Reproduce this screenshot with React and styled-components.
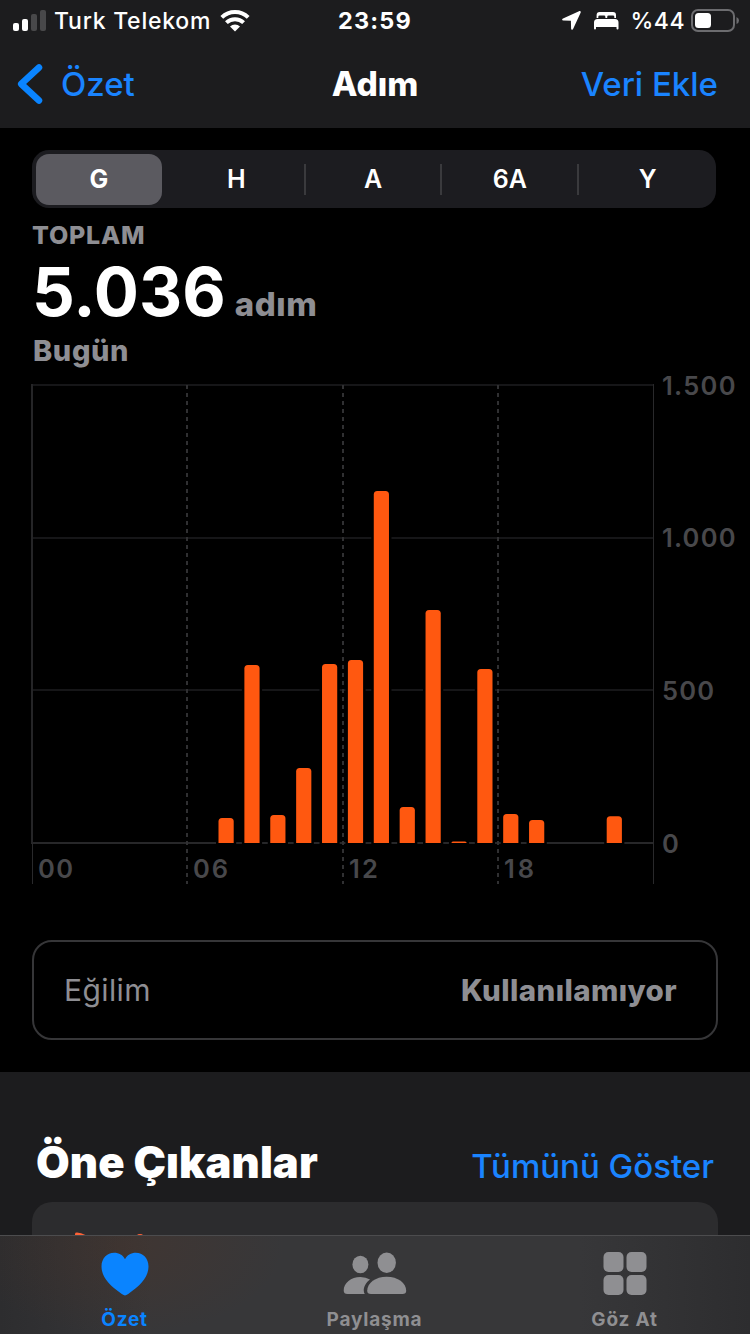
import React, { useState } from 'react';
import styled, { createGlobalStyle } from 'styled-components';

const GlobalStyle = createGlobalStyle`
  * {
    box-sizing: border-box;
  }

  body {
    margin: 0;
    background: #000;
    font-family: Inter, "Liberation Sans", sans-serif;
  }
`;

const Screen = styled.div`
  display: flex;
  flex-direction: column;
  width: 750px;
  height: 1334px;
  overflow: hidden;
  color: #fff;
  background: #000;
`;

const Header = styled.header`
  height: 128px;
  flex-shrink: 0;
  background: #1c1c1e;
`;

const StatusBar = styled.div`
  display: grid;
  grid-template-columns: 1fr auto 1fr;
  align-items: center;
  height: 41px;
  padding: 0 11px 0 13px;
`;

const StatusGroup = styled.div`
  display: flex;
  align-items: center;
  justify-content: ${(props) => (props.$end ? 'flex-end' : 'flex-start')};
`;

const StatusText = styled.span`
  font-size: 23px;
  line-height: 28px;
  font-weight: 500;
  letter-spacing: ${(props) => props.$spacing || 0}px;
  margin: ${(props) => props.$margin || 0};
  white-space: nowrap;
`;

const Clock = styled.time`
  padding-right: 2px;
  font-size: 23.5px;
  line-height: 28px;
  font-weight: 700;
  letter-spacing: 1.2px;
`;

const NavBar = styled.nav`
  display: grid;
  grid-template-columns: 1fr auto 1fr;
  align-items: center;
  height: 85px;
  padding: 0 32px 0 17px;
`;

const NavButton = styled.button`
  display: flex;
  align-items: center;
  justify-self: ${(props) => (props.$end ? 'end' : 'start')};
  gap: 18px;
  padding: 0;
  border: none;
  background: none;
  color: #1a84ff;
  font-family: inherit;
  font-size: 33px;
  line-height: 40px;
  font-weight: 500;
  cursor: pointer;
`;

const NavTitle = styled.h1`
  margin: 0 -15px 0 0;
  font-size: 33.5px;
  line-height: 40px;
  font-weight: 800;
`;

const Content = styled.main`
  flex: 1;
  min-height: 0;
  overflow: hidden;
`;

const Segments = styled.div`
  display: grid;
  grid-template-columns: repeat(5, 1fr);
  width: 684px;
  height: 58px;
  margin: 22px 0 0 32px;
  border-radius: 17px;
  background: #1c1c20;
`;

const Segment = styled.button`
  margin: ${(props) => (props.$active ? '4px 7px 4px 4px' : '14px 0')};
  padding: 0 0 1px;
  border: none;
  border-right: ${(props) => (props.$divider ? '2px solid #3a3a3d' : 'none')};
  border-radius: ${(props) => (props.$active ? '13px' : 0)};
  background: ${(props) => (props.$active ? '#5b5a60' : 'transparent')};
  color: #fff;
  font-family: inherit;
  font-size: 25px;
  font-weight: ${(props) => (props.$active ? 700 : 600)};
  cursor: pointer;
`;

const Summary = styled.section`
  padding: 12px 33px 2px;
  color: #8e8e93;
`;

const SummaryLabel = styled.div`
  margin-left: -1px;
  font-size: 25px;
  line-height: 30px;
  font-weight: 800;
  letter-spacing: 0.8px;
`;

const SummaryValue = styled.div`
  display: flex;
  align-items: baseline;
  gap: 9px;
  height: 84px;
  line-height: 84px;
`;

const Amount = styled.span`
  margin-left: -1px;
  color: #fff;
  font-size: 67px;
  font-weight: 700;
`;

const Unit = styled.span`
  font-size: 33px;
  font-weight: 800;
  letter-spacing: 0.6px;
`;

const SummaryDate = styled.div`
  font-size: 29px;
  line-height: 34px;
  font-weight: 800;
  letter-spacing: 0.6px;
`;

const ChartSvg = styled.svg`
  display: block;
  width: 750px;
  height: 520px;
`;

const AxisText = styled.text`
  fill: #48484b;
  font-size: 25.5px;
  font-weight: 600;
`;

const TrendCard = styled.section`
  display: flex;
  align-items: center;
  justify-content: space-between;
  width: 686px;
  height: 100px;
  margin: 50px 0 32px 32px;
  padding: 0 39px 0 30px;
  border: 2px solid #363638;
  border-radius: 20px;
  color: #8e8e93;
  font-size: 30px;
  letter-spacing: 0.4px;
`;

const TrendValue = styled.span`
  font-size: 29.5px;
  font-weight: 800;
`;

const Highlights = styled.section`
  height: 400px;
  padding: 64px 32px 0;
  background: #1c1c1e;
`;

const HighlightsHead = styled.div`
  display: flex;
  align-items: baseline;
  justify-content: space-between;
  height: 66px;
  padding: 0 4px;
`;

const HighlightsTitle = styled.h2`
  margin: 0;
  font-size: 43.5px;
  line-height: 52px;
  font-weight: 900;
  letter-spacing: 0.1px;
`;

const HighlightCard = styled.div`
  height: 200px;
  padding: 30px 42px;
  border-radius: 20px;
  background: #2c2c2e;
`;

const TabBar = styled.nav`
  display: grid;
  grid-template-columns: repeat(3, 250px);
  flex-shrink: 0;
  height: 99px;
  border-top: 1px solid #4c4c4e;
  background:
    radial-gradient(ellipse 160px 90px at 125px 10px, rgba(90, 50, 30, 0.25), transparent),
    linear-gradient(90deg, #2d2d2f 0, #373739 150px, #373739 580px, #2d2d2f 750px);
`;

const Tab = styled.button`
  display: flex;
  flex-direction: column;
  align-items: center;
  gap: 12px;
  padding: 16px 1px 0 0;
  border: none;
  background: none;
  color: ${(props) => (props.$active ? '#0a84ff' : '#8f8f92')};
  font-family: inherit;
  font-size: 19px;
  line-height: 24px;
  font-weight: 700;
  letter-spacing: 0.8px;
  cursor: pointer;
`;

const ranges = ['G', 'H', 'A', '6A', 'Y'];

const steps = [
  { hour: 7, count: 82 },
  { hour: 8, count: 583 },
  { hour: 9, count: 92 },
  { hour: 10, count: 246 },
  { hour: 11, count: 586 },
  { hour: 12, count: 599 },
  { hour: 13, count: 1153 },
  { hour: 14, count: 118 },
  { hour: 15, count: 763 },
  { hour: 16, count: 5 },
  { hour: 17, count: 570 },
  { hour: 18, count: 95 },
  { hour: 19, count: 75 },
  { hour: 22, count: 88 },
];

const SignalIcon = () => (
  <svg width="34" height="22" viewBox="0 0 34 22" fill="#fff">
    <rect x="0" y="13" width="6" height="8" rx="2" />
    <rect x="9" y="9" width="6" height="12" rx="2" />
    <rect x="18" y="4" width="6" height="17" rx="2" fill="#48484a" />
    <rect x="27" y="0" width="6" height="21" rx="2" fill="#48484a" />
  </svg>
);

const WifiIcon = () => (
  <svg width="30" height="22" viewBox="0 0 30 22" fill="none" stroke="#fff" strokeWidth="4">
    <path d="M1.8 7.4A19 19 0 0 1 28.2 7.4" />
    <path d="M6.4 12.6A12.4 12.4 0 0 1 23.6 12.6" />
    <path d="M15 21.6L10 16.6A7.2 7.2 0 0 1 20 16.6Z" fill="#fff" stroke="none" />
  </svg>
);

const LocationIcon = () => (
  <svg width="19" height="19" viewBox="0 0 19 19" fill="#fff">
    <path d="M17 .2L1 7.5C-.3 8.2-.1 9.5 1.2 9.6L8.9 9.8 9.1 17.4C9.2 18.8 10.6 19.1 11.2 17.8L18.6 1.8C19.1.7 18.3-.3 17 .2Z" />
  </svg>
);

const BedSvg = styled.svg`
  margin: 1px 11px 0 13px;
`;

const BedIcon = () => (
  <BedSvg width="25" height="18" viewBox="0 0 25 18" fill="#fff">
    <path d="M2.6 6V3Q2.6 0 5.6 0H19Q22 0 22 3V6H20.3V4.8Q20.3 3.6 19 3.6H14.6Q13.2 3.6 13.2 5V6H11.4V5Q11.4 3.6 10 3.6H5.6Q4.3 3.6 4.3 4.8V6Z" />
    <path d="M0 16.5V10.5Q0 7 3.5 7H21Q24.5 7 24.5 10.5V16.5Q24.5 17.5 23.5 17.5T22.5 16.5V15H2V16.5Q2 17.5 1 17.5T0 16.5Z" />
  </BedSvg>
);

const BatteryIcon = () => (
  <svg width="48" height="23" viewBox="0 0 48 23">
    <rect x="1" y="1" width="42" height="21" rx="6" fill="none" stroke="#6c6c6f" strokeWidth="2" />
    <rect x="4" y="4" width="16" height="15" rx="3.5" fill="#fff" />
    <path d="M45.5 8Q48 9.2 48 11.5T45.5 15Z" fill="#6c6c6f" />
  </svg>
);

const BackIcon = () => (
  <svg width="26" height="40" viewBox="0 0 26 40" fill="none">
    <path d="M22 3.5L4.2 20L22 36.5" stroke="#0a84ff" strokeWidth="6.5" strokeLinecap="round" strokeLinejoin="round" />
  </svg>
);

const HeartIcon = () => (
  <svg width="48" height="44" viewBox="0 0 48 44" fill="currentColor">
    <path d="M24 43.5Q22.8 43.3 20.8 41.9C8.5 33.5.5 25 .5 14.5C.5 6.5 6 .8 13.2.8C18 .8 22 3.2 24 7.2C26 3.2 30 .8 34.8.8C42 .8 47.5 6.5 47.5 14.5C47.5 25 39.5 33.5 27.2 41.9Q25.2 43.3 24 43.5Z" />
  </svg>
);

const PeopleIcon = () => (
  <svg width="64" height="44" viewBox="0 0 64 44" fill="currentColor">
    <ellipse cx="17.4" cy="12.5" rx="8" ry="8.8" />
    <ellipse cx="43.7" cy="10.8" rx="9.2" ry="10.2" />
    <path d="M4.5 42Q.7 42 .7 38.5C.7 31 8 25 17.4 25Q23 25 27 27.5C22.8 30.8 20.5 34.8 20.8 39Q20.9 40.8 21.8 42Z" />
    <path d="M28 42Q24.2 42 24.2 38.7C24.2 31 32.5 24.7 43.7 24.7S63.2 31 63.2 38.7Q63.2 42 59.4 42Z" />
  </svg>
);

const GridIcon = () => (
  <svg width="44" height="44" viewBox="0 0 44 44" fill="currentColor">
    <rect x="0.5" y="0" width="20" height="20" rx="5" />
    <rect x="23.5" y="0" width="20" height="20" rx="5" />
    <rect x="0.5" y="23" width="20" height="20" rx="5" />
    <rect x="23.5" y="23" width="20" height="20" rx="5" />
  </svg>
);

const tabs = [
  { label: 'Özet', icon: HeartIcon },
  { label: 'Paylaşma', icon: PeopleIcon },
  { label: 'Göz At', icon: GridIcon },
];

const StepChart = () => {
  const left = 32;
  const hourWidth = 25.88;
  const bottom = 473;
  const toY = (count) => bottom - (count * 458) / 1500;

  return (
    <ChartSvg viewBox="0 0 750 520">
      {[500, 1000, 1500].map((count) => (
        <path key={count} d={`M${left} ${Math.round(toY(count))}H654`} stroke="#161618" strokeWidth="2" />
      ))}
      <path d="M31 473H654" stroke="#272729" strokeWidth="2" />
      <path d="M32 14V473" stroke="#252527" strokeWidth="2" />
      <path d="M32.5 473V514" stroke="#29292b" />
      <path d="M653.5 14V514" stroke="#29292b" />
      {steps.map(({ hour, count }) => {
        const x = left + hourWidth * (hour + 0.5) - 7.6;
        const y = toY(count);
        const r = Math.min(3.5, bottom - y);
        const bar = `M${x} ${bottom}V${y + r}q0 ${-r} ${r} ${-r}h${15.2 - 2 * r}q${r} 0 ${r} ${r}V${bottom}Z`;
        return (
          <g key={hour}>
            <path d={bar} fill="#000" stroke="#000" strokeWidth="5" />
            <path d={bar} fill="#ff5810" />
          </g>
        );
      })}
      {[187, 343, 498].map((x) => (
        <path key={x} d={`M${x} 15V514`} stroke="#303032" strokeWidth="2" strokeDasharray="4 4" />
      ))}
      <AxisText x="662" y="25" textLength="73.5">1.500</AxisText>
      <AxisText x="662" y="177" textLength="73.5">1.000</AxisText>
      <AxisText x="662" y="330" textLength="52">500</AxisText>
      <AxisText x="662" y="483">0</AxisText>
      <AxisText x="38" y="508" textLength="35">00</AxisText>
      <AxisText x="193" y="508" textLength="35">06</AxisText>
      <AxisText x="349" y="508" textLength="29">12</AxisText>
      <AxisText x="504" y="508" textLength="30">18</AxisText>
    </ChartSvg>
  );
};

const App = () => {
  const [range, setRange] = useState('G');
  const [tab, setTab] = useState('Özet');

  return (
    <Screen>
      <GlobalStyle />
      <Header>
        <StatusBar>
          <StatusGroup>
            <SignalIcon />
            <StatusText $margin="0 9px 0 7px" $spacing={0.75}>Turk Telekom</StatusText>
            <WifiIcon />
          </StatusGroup>
          <Clock>23:59</Clock>
          <StatusGroup $end>
            <LocationIcon />
            <BedIcon />
            <StatusText $margin="0 6px 0 0" $spacing={0.5}>%44</StatusText>
            <BatteryIcon />
          </StatusGroup>
        </StatusBar>
        <NavBar>
          <NavButton>
            <BackIcon />
            Özet
          </NavButton>
          <NavTitle>Adım</NavTitle>
          <NavButton $end>Veri Ekle</NavButton>
        </NavBar>
      </Header>

      <Content>
        <Segments>
          {ranges.map((item, index) => (
            <Segment
              key={item}
              $active={item === range}
              $divider={index > 0 && index < ranges.length - 1}
              onClick={() => setRange(item)}
            >
              {item}
            </Segment>
          ))}
        </Segments>
        <Summary>
          <SummaryLabel>TOPLAM</SummaryLabel>
          <SummaryValue>
            <Amount>5.036</Amount>
            <Unit>adım</Unit>
          </SummaryValue>
          <SummaryDate>Bugün</SummaryDate>
        </Summary>
        <StepChart />
        <TrendCard>
          <span>Eğilim</span>
          <TrendValue>Kullanılamıyor</TrendValue>
        </TrendCard>
        <Highlights>
          <HighlightsHead>
            <HighlightsTitle>Öne Çıkanlar</HighlightsTitle>
            <NavButton $end>Tümünü Göster</NavButton>
          </HighlightsHead>
          <HighlightCard>
            <svg width="80" height="20" viewBox="0 0 80 20" fill="#ff6236">
              <path d="M1 2Q1 .6 3 .6Q8 .8 13 4V12L1 5Z" />
              <path d="M63 3.5Q63 2 66 2T69 3.5V8H63Z" />
            </svg>
          </HighlightCard>
        </Highlights>
      </Content>

      <TabBar>
        {tabs.map(({ label, icon: Icon }) => (
          <Tab key={label} $active={label === tab} onClick={() => setTab(label)}>
            <Icon />
            {label}
          </Tab>
        ))}
      </TabBar>
    </Screen>
  );
};

export default App;
